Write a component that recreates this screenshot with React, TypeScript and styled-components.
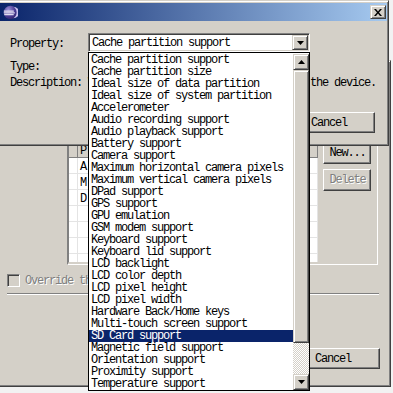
import React from "react";
import styled, { createGlobalStyle, css } from "styled-components";

const FACE = "#d4d0c8";

const GlobalStyle = createGlobalStyle`
  html, body { margin: 0; padding: 0; background: #f2f2f2; }
  * { box-sizing: border-box; }
`;

const sysFont = css`
  font-family: "Liberation Mono", "Courier New", monospace;
  font-size: 12px;
  line-height: 12px;
  letter-spacing: -1.2px;
  color: #000;
  white-space: nowrap;
`;

const raised = css`
  background: ${FACE};
  border: 1px solid;
  border-color: #fff #404040 #404040 #fff;
  box-shadow: inset -1px -1px #808080;
`;

const raisedSmall = css`
  background: ${FACE};
  border: 1px solid;
  border-color: ${FACE} #404040 #404040 ${FACE};
  box-shadow: inset 1px 1px #fff, inset -1px -1px #808080;
`;

const Screen = styled.div`
  position: relative;
  width: 393px;
  height: 393px;
  overflow: hidden;
  background: #f2f2f2;
  ${sysFont}
`;

const Window = styled.div<{ $top: number; $width: number; $height: number }>`
  position: absolute;
  left: -4px;
  top: ${(p) => p.$top}px;
  width: ${(p) => p.$width}px;
  height: ${(p) => p.$height}px;
  background: ${FACE};
  border: 1px solid;
  border-color: ${FACE} #404040 #404040 ${FACE};
  box-shadow: inset 1px 1px #fff, inset -1px -1px #808080;
  padding: 2px 1px 2px 3px;
  display: flex;
  flex-direction: column;
`;

const TitleBar = styled.div`
  flex: none;
  height: 18px;
  display: flex;
  align-items: center;
  justify-content: space-between;
  padding: 0 1px 0 3px;
  background: linear-gradient(to right, #0a246a, #a6caf0);
`;

const CloseButton = styled.div`
  ${raisedSmall}
  width: 16px;
  height: 14px;
  display: flex;
  align-items: center;
  justify-content: center;
`;

const DialogBody = styled.div`
  flex: 1;
  display: flex;
  flex-direction: column;
  padding: 12px 12px 10px 10px;
`;

const FieldRow = styled.div<{ $gap: number }>`
  display: grid;
  grid-template-columns: 78px 1fr;
  align-items: start;
  margin-top: ${(p) => p.$gap}px;
`;

const Label = styled.div<{ $offset?: number }>`
  margin-top: ${(p) => p.$offset ?? 0}px;
`;

const Value = styled.div``;

const Combo = styled.div`
  position: relative;
  width: 222px;
  height: 19px;
  background: #fff;
  border: 1px solid;
  border-color: #808080 #fff #fff #808080;
  box-shadow: inset 1px 1px #404040, inset -1px -1px ${FACE};
  padding: 1px;
  display: flex;
  align-items: flex-start;
`;

const ComboText = styled.div`
  flex: 1;
  padding: 2px 0 0 2px;
`;

const ArrowButton = styled.div<{ $h: number }>`
  ${raisedSmall}
  flex: none;
  width: 16px;
  height: ${(p) => p.$h}px;
  display: flex;
  align-items: center;
  justify-content: center;
`;

const ListBox = styled.div`
  position: absolute;
  left: -1px;
  top: calc(100% + 1px);
  width: 222px;
  height: 339px;
  z-index: 10;
  background: #fff;
  border: 1px solid #000;
  display: flex;
`;

const Items = styled.div`
  flex: 1;
  padding-top: 1px;
  overflow: hidden;
`;

const Item = styled.div<{ $selected?: boolean }>`
  height: 12px;
  line-height: 11px;
  padding: 1px 0 0 2px;
  background: ${(p) => (p.$selected ? "#0a246a" : "transparent")};
  color: ${(p) => (p.$selected ? "#fff" : "#000")};
`;

const ScrollBar = styled.div`
  flex: none;
  width: 16px;
  display: flex;
  flex-direction: column;
  padding-top: 1px;
`;

const Thumb = styled.div`
  ${raisedSmall}
  height: 273px;
  flex: none;
`;

const Track = styled.div`
  flex: 1;
  background-color: #fff;
  background-image: conic-gradient(${FACE} 25%, #fff 0 50%, ${FACE} 0 75%, #fff 0);
  background-size: 2px 2px;
`;

const Footer = styled.div`
  margin-top: auto;
  display: flex;
  justify-content: flex-end;
`;

const PushButton = styled.div<{ $w: number; $h: number; $disabled?: boolean }>`
  ${raised}
  width: ${(p) => p.$w}px;
  height: ${(p) => p.$h}px;
  display: flex;
  align-items: center;
  justify-content: center;
  padding-left: 1px;
  color: ${(p) => (p.$disabled ? "#808080" : "#000")};
  text-shadow: ${(p) => (p.$disabled ? "1px 1px #fff" : "none")};
`;

const OuterBody = styled.div`
  flex: 1;
  display: flex;
  flex-direction: column;
`;

const Group = styled.div`
  margin: 75px 0 0 67px;
  width: 311px;
  height: 127px;
  border: 1px solid;
  border-color: #808080 #fff #fff #808080;
  padding: 0 6px 1px 0;
  display: flex;
  gap: 4px;
`;

const Table = styled.div`
  width: 251px;
  height: 124px;
  background: #fff;
  border: 1px solid;
  border-color: #808080 #d4d0c8 #d4d0c8 #808080;
  overflow: hidden;
`;

const TableRow = styled.div<{ $header?: boolean }>`
  display: grid;
  grid-template-columns: 9px 150px 1fr;
  height: ${(p) => (p.$header ? 18 : 16)}px;
  background: ${(p) => (p.$header ? FACE : "#fff")};
  border-bottom: 1px solid ${(p) => (p.$header ? "#808080" : "#e4e4e4")};
`;

const Cell = styled.div<{ $header?: boolean }>`
  padding: ${(p) => (p.$header ? "5px 0 0 2px" : "3px 0 0 2px")};
  border-right: 1px solid ${(p) => (p.$header ? "#808080" : "#e4e4e4")};
  overflow: hidden;
`;

const SideButtons = styled.div`
  display: flex;
  flex-direction: column;
  gap: 5px;
  padding-top: 3px;
`;

const CheckRow = styled.div`
  margin: 9px 0 0 7px;
  height: 13px;
  display: flex;
  align-items: center;
  gap: 5px;
  color: #808080;
  text-shadow: 1px 1px #fff;
`;

const CheckBox = styled.div`
  width: 13px;
  height: 13px;
  flex: none;
  background: ${FACE};
  border: 1px solid;
  border-color: #808080 #fff #fff #808080;
  box-shadow: inset 1px 1px #404040, inset -1px -1px ${FACE};
`;

const Separator = styled.div`
  margin: 6px 10px 0 7px;
  height: 2px;
  border-top: 1px solid #808080;
  border-bottom: 1px solid #fff;
`;

const BottomButtons = styled.div`
  margin: 53px 9px 0 0;
  display: flex;
  justify-content: flex-end;
`;

const Arrow = ({ down }: { down?: boolean }) => (
  <svg width="7" height="4" viewBox="0 0 7 4">
    <polygon points={down ? "0,0 7,0 3.5,4" : "0,4 7,4 3.5,0"} fill="#000" />
  </svg>
);

const EclipseIcon = () => (
  <svg width="15" height="15" viewBox="0 0 15 15">
    <defs>
      <radialGradient id="eg" cx="0.35" cy="0.3" r="0.8">
        <stop offset="0" stopColor="#9c90d8" />
        <stop offset="0.6" stopColor="#4a3c94" />
        <stop offset="1" stopColor="#2a2060" />
      </radialGradient>
    </defs>
    <circle cx="7.5" cy="7.5" r="6.8" fill="url(#eg)" />
    <rect x="0.8" y="5.6" width="10" height="1" fill="#fff" />
    <rect x="0.8" y="7.4" width="11" height="1" fill="#fff" />
    <rect x="1.2" y="9.2" width="9.5" height="1" fill="#fff" />
    <path d="M10.5 1.8 A6.8 6.8 0 0 1 10.5 13.2 A5.6 5.6 0 0 0 10.5 1.8Z" fill="#c8c0ee" />
  </svg>
);

const CloseGlyph = () => (
  <svg width="8" height="7" viewBox="0 0 8 7">
    <path d="M0 0h2l2 2.5L6 0h2L5 3.5 8 7H6L4 4.5 2 7H0l3-3.5z" fill="#000" />
  </svg>
);

const properties = [
  "Cache partition support",
  "Cache partition size",
  "Ideal size of data partition",
  "Ideal size of system partition",
  "Accelerometer",
  "Audio recording support",
  "Audio playback support",
  "Battery support",
  "Camera support",
  "Maximum horizontal camera pixels",
  "Maximum vertical camera pixels",
  "DPad support",
  "GPS support",
  "GPU emulation",
  "GSM modem support",
  "Keyboard support",
  "Keyboard lid support",
  "LCD backlight",
  "LCD color depth",
  "LCD pixel height",
  "LCD pixel width",
  "Hardware Back/Home keys",
  "Multi-touch screen support",
  "SD Card support",
  "Magnetic field support",
  "Orientation support",
  "Proximity support",
  "Temperature support",
];

const hardware = ["A", "M", "D", "", "", "", ""];

export default function App() {
  return (
    <>
      <GlobalStyle />
      <Screen>
        <Window $top={60} $width={395} $height={327}>
          <OuterBody>
            <Group>
              <Table>
                <TableRow $header>
                  <Cell $header />
                  <Cell $header>P</Cell>
                  <Cell $header />
                </TableRow>
                {hardware.map((name, i) => (
                  <TableRow key={i}>
                    <Cell />
                    <Cell>{name}</Cell>
                    <Cell />
                  </TableRow>
                ))}
              </Table>
              <SideButtons>
                <PushButton $w={48} $h={22}>New...</PushButton>
                <PushButton $w={48} $h={22} $disabled>
                  Delete
                </PushButton>
              </SideButtons>
            </Group>
            <CheckRow>
              <CheckBox />
              <span>Override th</span>
            </CheckRow>
            <Separator />
            <BottomButtons>
              <PushButton $w={95} $h={21}>Cancel</PushButton>
            </BottomButtons>
          </OuterBody>
        </Window>

        <Window $top={0} $width={393} $height={146}>
          <TitleBar>
            <EclipseIcon />
            <CloseButton>
              <CloseGlyph />
            </CloseButton>
          </TitleBar>
          <DialogBody>
            <FieldRow $gap={0}>
              <Label $offset={5}>Property:</Label>
              <Combo>
                <ComboText>Cache partition support</ComboText>
                <ArrowButton $h={15}>
                  <Arrow down />
                </ArrowButton>
                <ListBox>
                  <Items>
                    {properties.map((p) => (
                      <Item key={p} $selected={p === "SD Card support"}>
                        {p}
                      </Item>
                    ))}
                  </Items>
                  <ScrollBar>
                    <ArrowButton $h={16}>
                      <Arrow />
                    </ArrowButton>
                    <Thumb />
                    <Track />
                    <ArrowButton $h={16}>
                      <Arrow down />
                    </ArrowButton>
                  </ScrollBar>
                </ListBox>
              </Combo>
            </FieldRow>
            <FieldRow $gap={9}>
              <Label>Type:</Label>
              <Value />
            </FieldRow>
            <FieldRow $gap={4}>
              <Label>Description:</Label>
              <Value>Whether we have a cache partition on the device.</Value>
            </FieldRow>
            <Footer>
              <PushButton $w={93} $h={21}>Cancel</PushButton>
            </Footer>
          </DialogBody>
        </Window>
      </Screen>
    </>
  );
}
